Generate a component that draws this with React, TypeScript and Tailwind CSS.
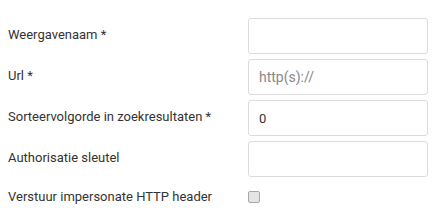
import React from 'react';

const rows = [
  { label: 'Weergavenaam *', placeholder: '', value: '' },
  { label: 'Url *', placeholder: 'http(s)://', value: '' },
  { label: 'Sorteervolgorde in zoekresultaten *', placeholder: '', value: '0' },
  { label: 'Authorisatie sleutel', placeholder: '', value: '' },
];

const App: React.FC = () => {
  return (
    <div className="w-[446px] h-[216px] bg-white pt-[18px] text-[13px] text-[#333]" style={{ fontFamily: 'Roboto, sans-serif' }}>
      <div className="flex flex-col gap-[5px]">
        {rows.map((row) => (
          <div key={row.label} className="flex items-start">
            <label className="w-[248px] pl-2 pt-[9px] leading-[15px]">{row.label}</label>
            <input
              type="text"
              defaultValue={row.value}
              placeholder={row.placeholder}
              className="w-[180px] h-[36px] border border-[#dcdcdc] rounded-[3px] px-[10px] text-[13px] text-[#333] placeholder:text-[#888] placeholder:text-[14px] outline-none"
            />
          </div>
        ))}
      </div>
      <div className="flex items-center mt-[12px]">
        <label className="w-[248px] pl-2 leading-[15px]">Verstuur impersonate HTTP header</label>
        <span className="w-[12px] h-[12px] rounded-[2px] border border-[#a8a8a8] bg-[#e4e4e4]" />
      </div>
    </div>
  );
};

export default App;
